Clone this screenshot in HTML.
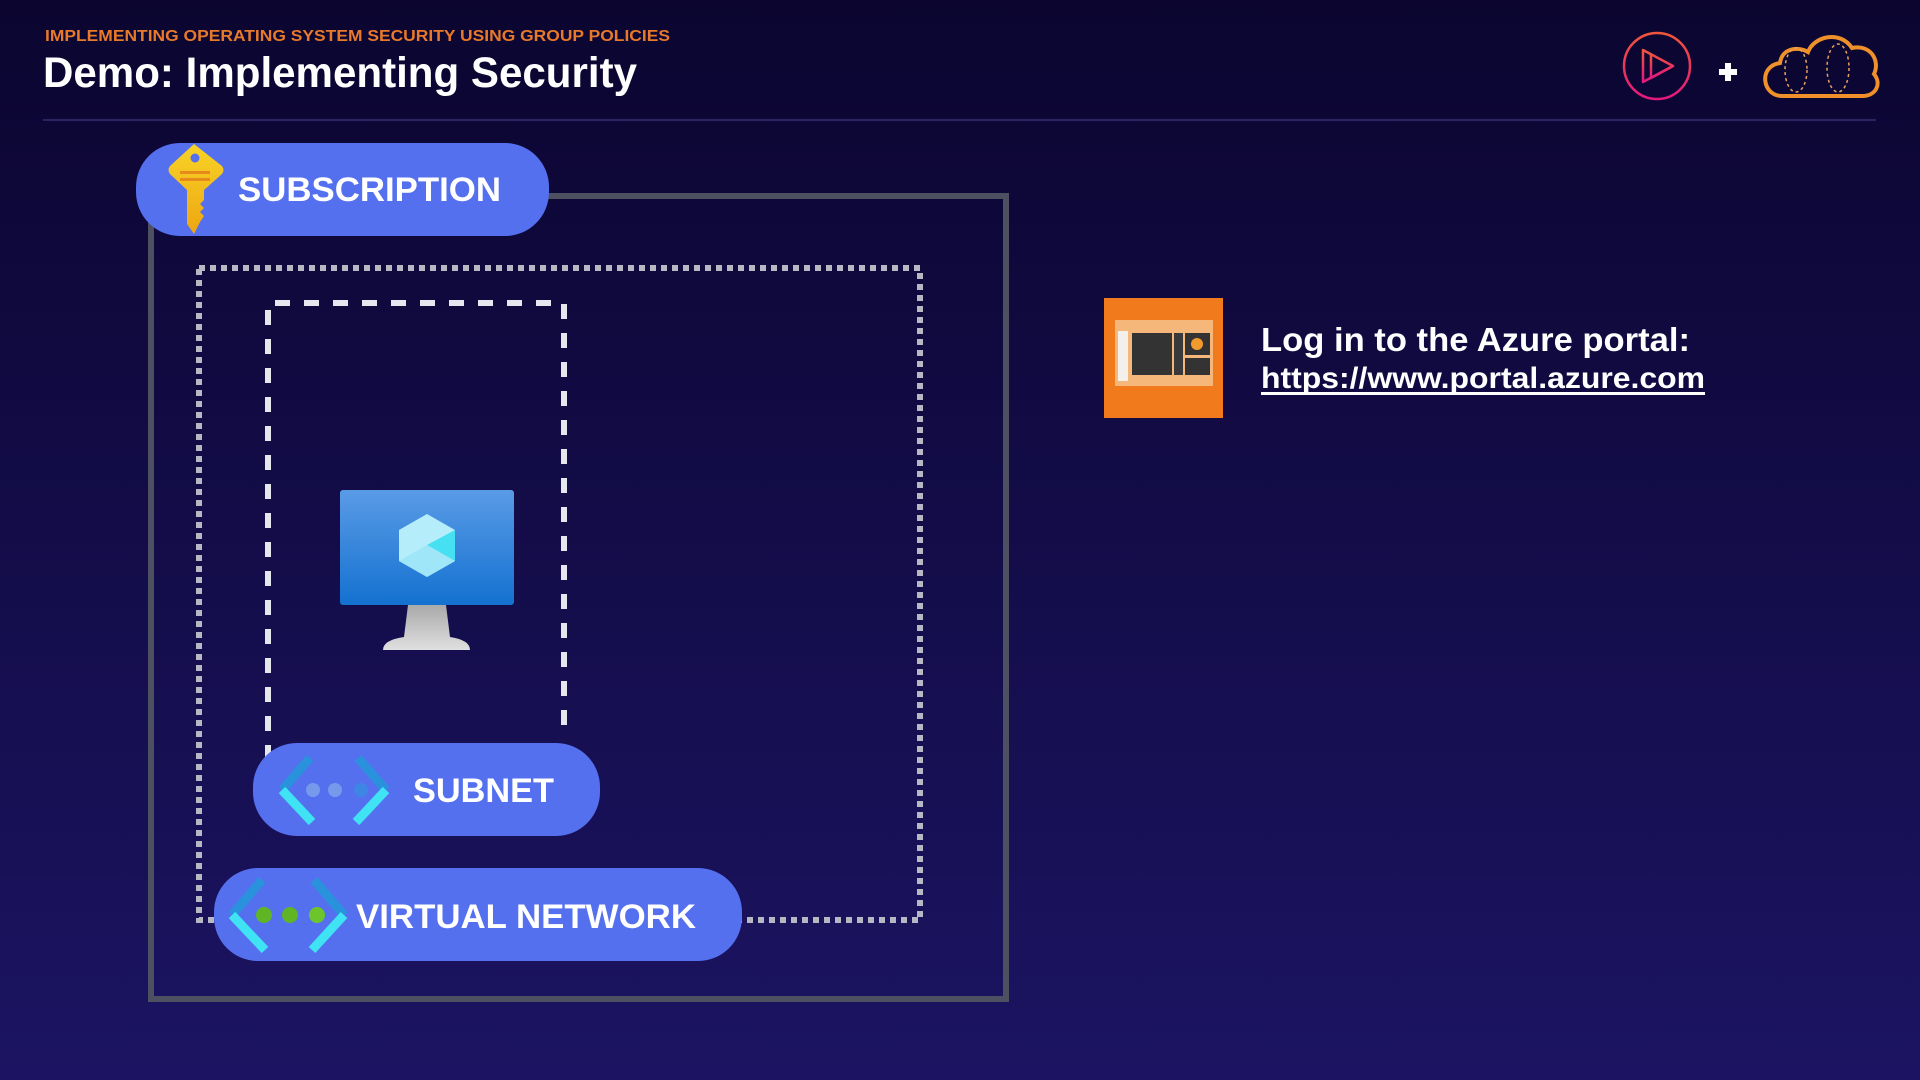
<!DOCTYPE html>
<html><head><meta charset="utf-8"><style>
html,body{margin:0;padding:0;width:1920px;height:1080px;overflow:hidden;background:#120b45}
svg{display:block}
text{font-family:"Liberation Sans",sans-serif;font-weight:bold}
</style></head><body>
<svg width="1920" height="1080" viewBox="0 0 1920 1080" xmlns="http://www.w3.org/2000/svg">
<defs>
<linearGradient id="bg" x1="0" y1="0" x2="0" y2="1"><stop offset="0" stop-color="#0b0530"/><stop offset="1" stop-color="#1c1462"/></linearGradient>
<linearGradient id="scr" x1="0" y1="0" x2="0" y2="1"><stop offset="0" stop-color="#5a9be6"/><stop offset="1" stop-color="#1471d0"/></linearGradient>
<linearGradient id="stand" x1="0" y1="0" x2="0" y2="1"><stop offset="0" stop-color="#a9a9a9"/><stop offset="1" stop-color="#e0e0e0"/></linearGradient>
<linearGradient id="key" x1="0" y1="0" x2="0" y2="1"><stop offset="0" stop-color="#f7d327"/><stop offset="1" stop-color="#eea611"/></linearGradient>
<linearGradient id="pl" x1="0" y1="0" x2="0" y2="1"><stop offset="0" stop-color="#f0563c"/><stop offset="1" stop-color="#e4187c"/></linearGradient>
</defs>
<rect width="1920" height="1080" fill="url(#bg)"/>
<text x="45" y="41" font-size="16" fill="#e8792b" textLength="625" lengthAdjust="spacingAndGlyphs">IMPLEMENTING OPERATING SYSTEM SECURITY USING GROUP POLICIES</text>
<text x="43" y="87" font-size="43" fill="#fff" textLength="594" lengthAdjust="spacingAndGlyphs">Demo: Implementing Security</text>
<rect x="43" y="119" width="1833" height="2" fill="#2a2562"/>
<!-- logos -->
<circle cx="1657" cy="66" r="33" fill="none" stroke="url(#pl)" stroke-width="2.5"/>
<path d="M1643 50 L1643 82 L1673 66 Z" fill="none" stroke="url(#pl)" stroke-width="2.5" stroke-linejoin="round"/>
<path d="M1651 54 L1651 78 L1673 66" fill="none" stroke="url(#pl)" stroke-width="2.5" stroke-linejoin="round"/>
<rect x="1719" y="69" width="18" height="6" fill="#fff"/><rect x="1725" y="63" width="6" height="18" fill="#fff"/>
<path d="M1782 96 C1762 96 1758 66 1780 63 C1782 48 1798 46 1808 52 C1814 36 1840 30 1852 48 C1872 44 1880 62 1874 74 C1882 84 1876 96 1862 96 Z" fill="none" stroke="#f0902a" stroke-width="4"/>
<ellipse cx="1796" cy="70" rx="11" ry="22" fill="none" stroke="#e8a060" stroke-width="1.5" stroke-dasharray="3 3"/>
<ellipse cx="1838" cy="68" rx="11" ry="24" fill="none" stroke="#e8a060" stroke-width="1.5" stroke-dasharray="3 3"/>
<!-- boxes -->
<rect x="151" y="196" width="855" height="803" fill="none" stroke="#4d5060" stroke-width="6"/>
<rect x="199" y="268" width="721" height="652" fill="none" stroke="#b8b8c4" stroke-width="6" stroke-dasharray="6 5"/>
<path d="M268 760 L268 303 L564 303 L564 730" fill="none" stroke="#e6e6ee" stroke-width="6" stroke-dasharray="15 14"/>
<!-- monitor -->
<path d="M408 605 L446 605 L450 637 Q470 640 470 650 L383 650 Q383 640 404 637 Z" fill="url(#stand)"/>
<rect x="340" y="490" width="174" height="115" rx="3" fill="url(#scr)"/>
<polygon points="427,514 455,530 455,561 427,577 399,561 399,530" fill="#b5eefa"/>
<polygon points="427,545 455,530 455,561" fill="#45e0f2"/>
<polygon points="427,545 399,561 427,577 455,561" fill="#9fe6f8"/>
<!-- subscription -->
<rect x="136" y="143" width="413" height="93" rx="44" fill="#5470ef"/>
<path d="M194 144 L222 166 Q225 170 222 174 L204 190 L204 200 L200 204 L204 208 L200 212 L204 216 L200 222 L194 234 L187 224 L187 190 L170 174 Q167 170 170 166 Z" fill="url(#key)"/>
<circle cx="195" cy="158" r="4.5" fill="#5470ef"/>
<rect x="180" y="171" width="30" height="3" fill="#e68a1a"/><rect x="180" y="178" width="30" height="3" fill="#e68a1a"/>
<text x="238" y="201" font-size="34" fill="#fff" textLength="263" lengthAdjust="spacingAndGlyphs">SUBSCRIPTION</text>
<!-- subnet -->
<rect x="253" y="743" width="347" height="93" rx="44" fill="#5470ef"/>
<path d="M310 758 L282 790" stroke="#2a92dc" stroke-width="9"/><path d="M282 790 L312 822" stroke="#3fe3f4" stroke-width="9"/>
<path d="M358 758 L386 790" stroke="#2a92dc" stroke-width="9"/><path d="M386 790 L356 822" stroke="#3fe3f4" stroke-width="9"/>
<circle cx="313" cy="790" r="7" fill="#7799ec"/><circle cx="335" cy="790" r="7" fill="#7799ec"/><circle cx="361" cy="790" r="7" fill="#3e86e4"/>
<text x="413" y="802" font-size="34" fill="#fff" textLength="141" lengthAdjust="spacingAndGlyphs">SUBNET</text>
<!-- vnet -->
<rect x="214" y="868" width="528" height="93" rx="44" fill="#5470ef"/>
<path d="M262 880 L232 915" stroke="#2a92dc" stroke-width="9"/><path d="M232 915 L265 950" stroke="#3fe3f4" stroke-width="9"/>
<path d="M314 880 L344 915" stroke="#2a92dc" stroke-width="9"/><path d="M344 915 L312 950" stroke="#3fe3f4" stroke-width="9"/>
<circle cx="264" cy="915" r="8" fill="#5fb524"/><circle cx="290" cy="915" r="8" fill="#5fb524"/><circle cx="317" cy="915" r="8" fill="#6cc52a"/>
<text x="356" y="928" font-size="34" fill="#fff" textLength="340" lengthAdjust="spacingAndGlyphs">VIRTUAL NETWORK</text>
<!-- thumbnail -->
<rect x="1104" y="298" width="119" height="120" fill="#f07a1c"/>
<rect x="1115" y="320" width="98" height="66" fill="#f6b77a"/>
<rect x="1118" y="331" width="10" height="50" fill="#f3f0ec"/>
<rect x="1132" y="333" width="40" height="42" fill="#333"/>
<rect x="1174" y="333" width="9" height="42" fill="#3a3a3a"/>
<rect x="1185" y="333" width="25" height="22" fill="#333"/><circle cx="1197" cy="344" r="6" fill="#f39a2c"/>
<rect x="1185" y="358" width="25" height="17" fill="#333"/>
<text x="1261" y="351" font-size="33" fill="#fff" textLength="429" lengthAdjust="spacingAndGlyphs">Log in to the Azure portal:</text>
<text x="1261" y="388" font-size="30" fill="#fff" textLength="444" lengthAdjust="spacingAndGlyphs">https://www.portal.azure.com</text>
<rect x="1261" y="392" width="444" height="3" fill="#fff"/>
</svg>
</body></html>
